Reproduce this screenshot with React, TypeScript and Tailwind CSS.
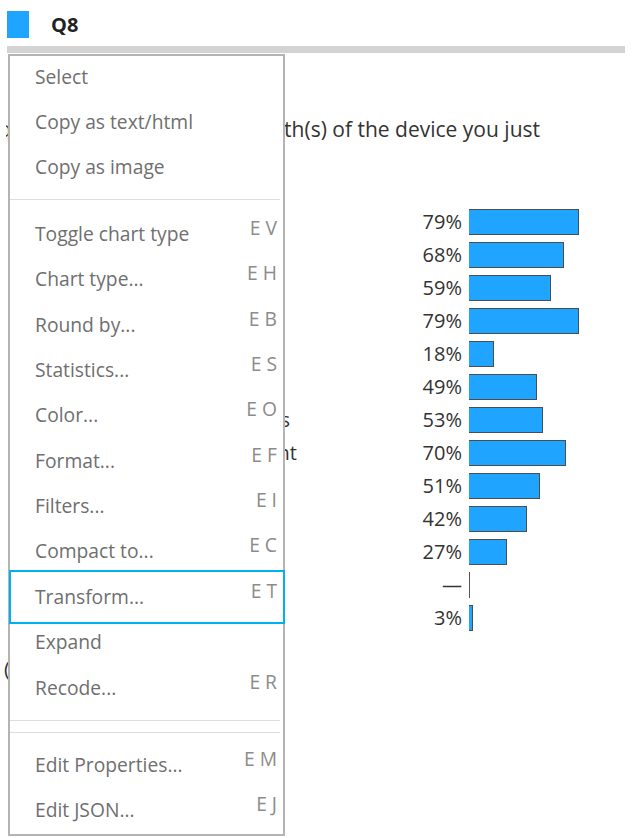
export default function App() {
  const rows = [
    { label: "Less than 4 inches", pct: 79, pad: "pr-[25px]" },
    { label: "4 to 6 inches", pct: 68, pad: "pr-[25px]" },
    { label: "6 to 8 inches", pct: 59, pad: "pr-[25px]" },
    { label: "8 to 10 inches", pct: 79, pad: "pr-[25px]" },
    { label: "10 to 12 inches", pct: 18, pad: "pr-[25px]" },
    { label: "12 to 14 inches", pct: 49, pad: "pr-[25px]" },
    { label: "Two or more lengths", pct: 53, pad: "pr-[10px]" },
    { label: "Don't remember / Not relevant", pct: 70, pad: "pr-[3px]" },
    { label: "14 to 16 inches", pct: 51, pad: "pr-[25px]" },
    { label: "16 to 18 inches", pct: 42, pad: "pr-[25px]" },
    { label: "More than 18 inches", pct: 27, pad: "pr-[25px]" },
    { label: "Other", pct: null, pad: "pr-[25px]" },
    { label: "Prefer not to say", pct: 3, pad: "pr-[25px]" },
  ];

  const groupA = ["Select", "Copy as text/html", "Copy as image"];
  const groupB = [
    { label: "Toggle chart type", key: "E V" },
    { label: "Chart type...", key: "E H" },
    { label: "Round by...", key: "E B" },
    { label: "Statistics...", key: "E S" },
    { label: "Color...", key: "E O" },
    { label: "Format...", key: "E F" },
    { label: "Filters...", key: "E I" },
    { label: "Compact to...", key: "E C" },
    { label: "Transform...", key: "E T", active: true },
    { label: "Expand", key: "" },
    { label: "Recode...", key: "E R" },
  ];
  const groupC = [
    { label: "Edit Properties...", key: "E M" },
    { label: "Edit JSON...", key: "E J" },
  ];

  return (
    <div className="relative w-[632px] h-[838px] overflow-hidden bg-white font-['Open_Sans',sans-serif] text-[#333]">
      {/* Header */}
      <div className="flex items-center pl-[7px] pt-[11px]">
        <div className="w-[22px] h-[27px] bg-[#1fa5ff]" />
        <div className="ml-[22px] text-[20px] font-bold leading-[27px] text-[#222]">
          Q8
        </div>
      </div>
      <div className="mx-[7px] mt-[8px] h-[7px] bg-[#d3d3d3]" />

      {/* Question */}
      <div className="mt-[63px] ml-[6px] flex justify-end w-[534px] overflow-hidden whitespace-nowrap text-[21px] leading-[26px]">
        (Required) Please select the length(s) of the device you just
      </div>

      {/* Chart */}
      <div className="mt-[63px] flex flex-col">
        {rows.map((r, i) => (
          <div key={i} className="flex items-center h-[33px]">
            <div
              className={
                "w-[300px] flex justify-end overflow-hidden whitespace-nowrap text-[20px] " +
                r.pad
              }
            >
              {r.label}
            </div>
            <div className="w-[162px] text-right text-[20px] leading-[26px]">
              {r.pct === null ? "—" : r.pct + "%"}
            </div>
            {r.pct === null ? (
              <div className="ml-[7px] w-px h-[26px] bg-[#555]" />
            ) : (
              <div
                className="ml-[7px] h-[26px] bg-[#1fa5ff] border-y border-r border-[#4d4d4d]"
                style={{ width: r.pct * 1.39 }}
              />
            )}
          </div>
        ))}
      </div>
      <div className="mt-[22px] pl-[4px] text-[20px] leading-[26px]">
        (Base: all respondents)
      </div>

      {/* Context menu */}
      <div className="absolute left-[8px] top-[54px] w-[277px] bg-white border-2 border-[#b4b4b4] flex flex-col text-[19.25px] text-[#6f6f6f]">
        <div className="flex flex-col -mt-[1px]">
          {groupA.map((l) => (
            <div key={l} className="h-[45px] flex items-center pl-[25px]">
              {l}
            </div>
          ))}
        </div>
        <div className="mt-[9px] mb-[11.5px] mr-[3px] h-px bg-[#dcdcdc]" />
        <div className="flex flex-col">
          {groupB.map((it) => (
            <div
              key={it.label}
              className="relative h-[45.4px] flex items-center justify-between pl-[25px] pr-[6px]"
            >
              <span>{it.label}</span>
              <span className="relative -top-[6px] text-[#8c8c8c]">{it.key}</span>
              {it.active && (
                <div className="absolute -top-[5px] -bottom-[4px] -left-[1px] -right-[2px] border-2 border-[#00b0f0]" />
              )}
            </div>
          ))}
        </div>
        <div className="mt-[9px] mr-[3px] h-px bg-[#dcdcdc]" />
        <div className="mt-[11px] mb-[10px] mr-[3px] h-px bg-[#dcdcdc]" />
        <div className="flex flex-col">
          {groupC.map((it) => (
            <div
              key={it.label}
              className="h-[45.4px] flex items-center justify-between pl-[25px] pr-[6px]"
            >
              <span>{it.label}</span>
              <span className="relative -top-[6px] text-[#8c8c8c]">{it.key}</span>
            </div>
          ))}
        </div>
      </div>
    </div>
  );
}
